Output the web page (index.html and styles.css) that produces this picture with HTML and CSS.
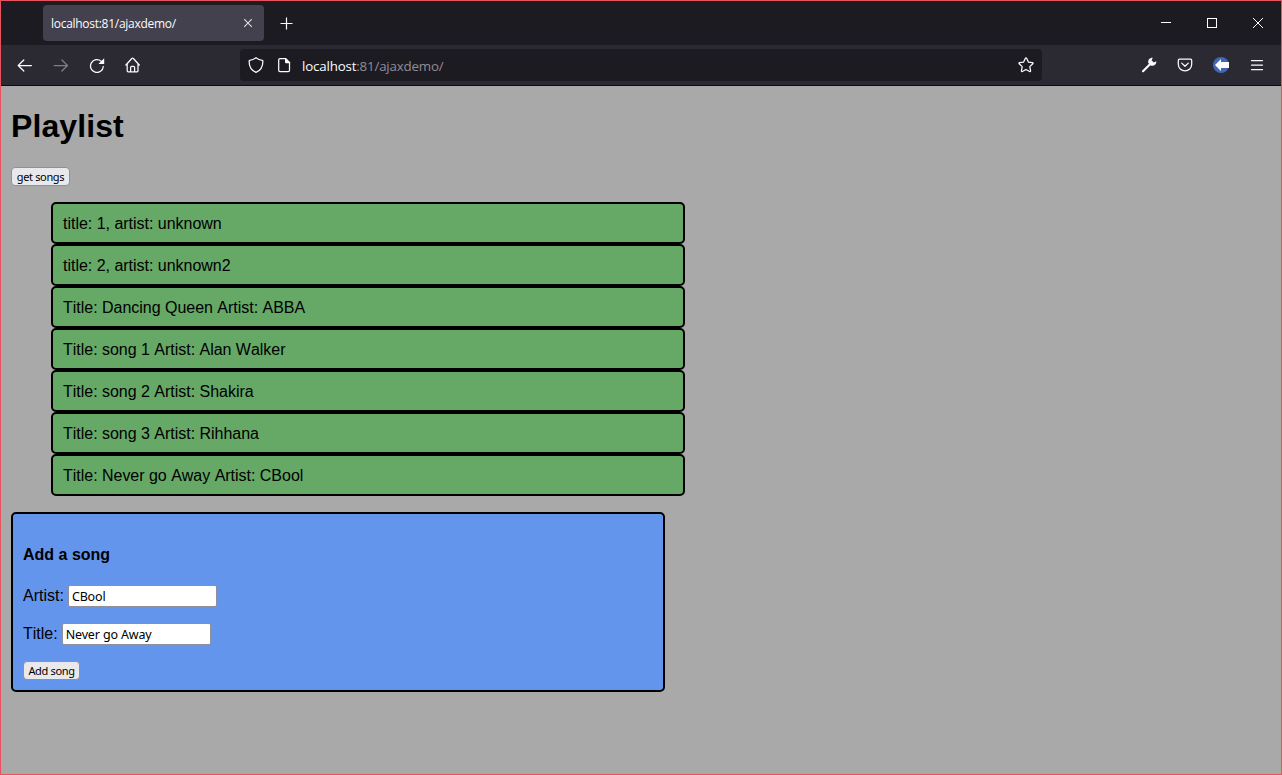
FILE: index.html
```html
<!DOCTYPE html>
<html lang="en">
<head>
<meta charset="utf-8">
<title>localhost:81/ajaxdemo/</title>
<link rel="stylesheet" href="styles.css">
</head>
<body>
<div class="window">
  <header class="tabstrip">
    <div class="tab">
      <span class="tab-title">localhost:81/ajaxdemo/</span>
      <svg class="tab-close" width="10" height="10" viewBox="0 0 10 10"><path d="M1.2 1.2l7.6 7.6M8.8 1.2l-7.6 7.6"/></svg>
    </div>
    <svg class="new-tab" width="13" height="13" viewBox="0 0 13 13"><path d="M6.5 .5v12M.5 6.5h12"/></svg>
    <div class="controls">
      <svg width="10" height="10" viewBox="0 0 10 10" shape-rendering="crispEdges"><path d="M0 4.5h10"/></svg>
      <svg width="10" height="10" viewBox="0 0 10 10" shape-rendering="crispEdges"><path d="M.5 .5h9v9h-9z"/></svg>
      <svg width="10" height="10" viewBox="0 0 10 10"><path d="M0 0l10 10M10 0L0 10"/></svg>
    </div>
  </header>
  <nav class="toolbar">
    <div class="nav-buttons">
      <svg class="icon" width="16" height="16" viewBox="0 0 16 16"><path d="M14.400 8.500H1.200M6.800 3L1.200 8.500l5.600 5.500"/></svg>
      <svg class="icon disabled" width="16" height="16" viewBox="0 0 16 16"><path d="M1.200 8.500h13.200M8.900 3l5.600 5.500-5.600 5.500"/></svg>
      <svg class="icon" width="16" height="16" viewBox="0 0 16 16"><path d="M14.300 9.500A6.400 6.400 0 1 1 12.200 4.300"/><path class="solid" d="M15.200 1.200V7H9.400z"/></svg>
      <svg class="icon" width="16" height="16" viewBox="0 0 16 16"><path d="M.9 8L6.800 1.500q.8-.7 1.600 0L14.300 8M2.200 7v6.800q0 1 1 1h8.800q1 0 1-1V7M5.600 14.500v-4q0-1.200 1.200-1.200h1.600q1.200 0 1.200 1.200v4"/></svg>
    </div>
    <div class="urlbar">
      <svg class="icon" width="16" height="16" viewBox="0 0 16 16"><path d="M8 .8c2 1.600 4 2.300 6.300 2.500q.6.100.6.700C14.900 9.500 12.800 13.500 8 15.300 3.200 13.500 1.100 9.500 1.100 4q0-.6.6-.7C4 3.100 6 2.400 8 .8z"/></svg>
      <svg class="icon page-icon" width="16" height="16" viewBox="0 0 16 16"><path d="M9.500 1.700H4q-1.300 0-1.300 1.300v10.300q0 1.300 1.300 1.300h8.200q1.300 0 1.300-1.300V5.500"/><path class="solid" d="M9 1h1l4.200 4.200v1.100H10q-1 0-1-1z"/></svg>
      <span class="url"><b>localhost</b>:81/ajaxdemo/</span>
      <svg class="icon star" width="16" height="16" viewBox="0 0 16 16"><path d="M7.300 1.400q.7-1 1.400 0l1.700 3.700 4 .5q1 .3.400 1.200l-3 2.800.8 4.200q0 1-1 .7L8 12.500l-3.600 2q-1 .3-1-.7l.8-4.200-3-2.800q-.6-.9.400-1.200l4-.5z"/></svg>
    </div>
    <div class="actions">
      <svg class="icon" width="16" height="16" viewBox="0 0 16 16"><path class="wrench" d="M2 14.200L9 7.200"/><path class="solid" d="M11.800.8L10.600 3.200l2.200 2.200 2.500-1.200c.2 3.200-2.100 5.100-5.200 4.500L7.300 6.100C6.700 3 8.600.5 11.800.8z"/></svg>
      <svg class="icon" width="16" height="16" viewBox="0 0 16 16"><path d="M2.500 2.200h11q1.200 0 1.200 1.200V7.200a6.700 6.700 0 0 1-13.400 0V3.400q0-1.200 1.200-1.200zM4.700 6.100L8 9.300l3.300-3.200"/></svg>
      <svg width="16" height="16" viewBox="0 0 16 16"><circle cx="8" cy="8" r="8" fill="#4068b8"/><path fill="#fff" d="M2 8l6-6V5H16v6H8v3z"/></svg>
      <svg class="icon menu" width="16" height="16" viewBox="0 0 16 16"><path d="M2.500 3.500h11M2.500 8h11M2.500 12.500h11"/></svg>
    </div>
  </nav>
  <main class="page">
    <h1>Playlist</h1>
    <button class="btn btn-get">get songs</button>
    <ul class="songs">
      <li>title: 1, artist: unknown</li>
      <li>title: 2, artist: unknown2</li>
      <li>Title: Dancing Queen Artist: ABBA</li>
      <li>Title: song 1 Artist: Alan Walker</li>
      <li>Title: song 2 Artist: Shakira</li>
      <li>Title: song 3 Artist: Rihhana</li>
      <li>Title: Never go Away Artist: CBool</li>
    </ul>
    <section class="add-form">
      <h4>Add a song</h4>
      <label class="field">Artist: <input type="text" value="CBool"></label>
      <label class="field">Title: <input type="text" value="Never go Away"></label>
      <button class="btn btn-add">Add song</button>
    </section>
  </main>
</div>
</body>
</html>
```
FILE: styles.css
```css
* { box-sizing: border-box; }
body { margin: 0; overflow: hidden; }
svg { display: block; flex: none; fill: none; }
.window {
  display: flex;
  flex-direction: column;
  height: 775px;
  border: 1px solid #e8515e;
  background: #a9a9a9;
}
.tabstrip {
  display: flex;
  align-items: center;
  height: 44px;
  padding-left: 42px;
  background: #1c1b22;
}
.tab {
  display: flex;
  align-items: center;
  justify-content: space-between;
  width: 221px;
  height: 36px;
  padding: 0 11px 0 8px;
  border-radius: 4px;
  background: #42414d;
  color: #fbfbfe;
  font: 12px "Open Sans", "Noto Sans", sans-serif;
}
.tab-title { letter-spacing: -0.28px; }
.tab-close { stroke: #dedee3; stroke-width: 1.1; }
.new-tab { margin-left: 16px; stroke: #fbfbfe; stroke-width: 1.2; }
.controls {
  display: flex;
  gap: 36px;
  margin-left: auto;
  padding-right: 18px;
}
.controls svg { stroke: #fff; stroke-width: 1; }
.toolbar {
  display: flex;
  align-items: center;
  height: 41px;
  padding: 0 16px;
  border-bottom: 1px solid #0c0c0d;
  background: #2b2a33;
}
.nav-buttons { display: flex; gap: 20px; }
.icon { stroke: #fbfbfe; stroke-width: 1.25; stroke-linecap: round; stroke-linejoin: round; }
.icon .solid { fill: #fbfbfe; stroke: none; }
.icon .wrench { stroke-width: 2.2; }
.disabled { opacity: .4; }
.urlbar {
  display: flex;
  align-items: center;
  width: 802px;
  height: 32px;
  margin-left: 99px;
  padding: 0 8px;
  border-radius: 4px;
  background: #1c1b22;
}
.page-icon { margin-left: 12px; }
.url {
  margin: 1px 0 0 10px;
  color: #8f8e98;
  font: 13.33px "Open Sans", "Noto Sans", sans-serif;
  letter-spacing: -0.18px;
}
.url b { color: #fbfbfe; font-weight: 400; }
.star { margin-left: auto; }
.actions { display: flex; gap: 20px; margin-left: auto; }
.page {
  padding: 22px 10px 0;
  color: #000;
  font: 16px/18px "Liberation Sans", Arial, sans-serif;
  font-kerning: none;
}
h1 { margin: 0 0 22px; font-size: 32px; line-height: 37px; letter-spacing: 0.1px; }
.btn {
  display: block;
  height: 19px;
  padding: 0;
  border: 1px solid #8f8f9d;
  border-radius: 4px;
  background: #e9e9ed;
  color: #000;
  font: 11px/17px "Noto Sans", sans-serif;
  letter-spacing: -0.35px;
  white-space: nowrap;
}
.btn-get { width: 59px; }
.btn-add { width: 57px; }
.songs { width: 634px; margin: 16px 0 16px 40px; padding: 0; list-style: none; }
.songs li {
  height: 42px;
  padding: 11px 10px 9px;
  border: 2px solid #000;
  border-radius: 5px;
  background: #66a866;
  letter-spacing: -0.02px;
}
.add-form {
  width: 654px;
  height: 180px;
  padding: 32px 10px 0;
  border: 2px solid #000;
  border-radius: 5px;
  background: #6495ed;
}
h4 { margin: 0 0 21px; font-size: 16px; }
.field {
  display: flex;
  align-items: center;
  gap: 4px;
  height: 22px;
  margin-bottom: 16px;
}
.field input {
  width: 149px;
  height: 22px;
  padding: 1px 3px 0;
  border: 1px solid #8f8f9d;
  border-radius: 2px;
  background: #fff;
  color: #000;
  font: 12.5px "Noto Sans", sans-serif;
  letter-spacing: -0.15px;
}
```
